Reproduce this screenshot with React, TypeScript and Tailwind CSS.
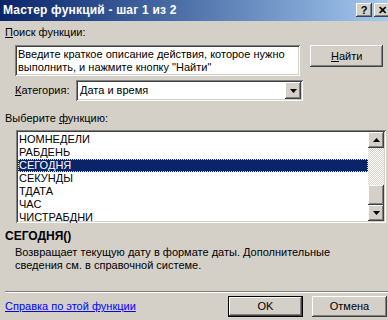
import React from 'react'

const raised =
  'bg-[#d4d0c8] shadow-[inset_-1px_-1px_#404040,inset_1px_1px_#ffffff,inset_-2px_-2px_#808080,inset_2px_2px_#d4d0c8]'
const sunken =
  'bg-white shadow-[inset_1px_1px_#808080,inset_-1px_-1px_#ffffff,inset_2px_2px_#404040,inset_-2px_-2px_#d4d0c8]'

const funcs = ['НОМНЕДЕЛИ', 'РАБДЕНЬ', 'СЕГОДНЯ', 'СЕКУНДЫ', 'ТДАТА', 'ЧАС', 'ЧИСТРАБДНИ']

function Arrow({ down }: { down?: boolean }) {
  return (
    <svg width="7" height="4" viewBox="0 0 7 4" className="block">
      {down ? <polygon points="0,0 7,0 3.5,4" fill="#000" /> : <polygon points="0,4 7,4 3.5,0" fill="#000" />}
    </svg>
  )
}

export default function App() {
  return (
    <div className="w-[388px] h-[320px] overflow-hidden bg-[#d4d0c8] text-[11px] leading-[13px] text-black font-['Liberation_Sans',Arial,sans-serif]">
      {/* title bar */}
      <div className="flex h-[21px] items-center justify-between bg-gradient-to-r from-[#0a246a] to-[#a6caf0] pl-[3px]">
        <span className="text-[12px] font-bold tracking-[0.2px] text-white">Мастер функций - шаг 1 из 2</span>
        <div className="mr-[-2px] flex gap-[2px] self-start pt-[3px]">
          <div className={`flex h-[14px] w-[16px] items-center justify-center text-[11px] font-bold ${raised}`}>?</div>
          <div className={`flex h-[14px] w-[16px] items-center justify-center text-[11px] font-bold ${raised}`}>✕</div>
        </div>
      </div>

      <div className="px-[5px]">
        <div className="mt-[5px] h-[13px]">
          <span className="underline">П</span>оиск функции:
        </div>

        <div className="mt-[6px] flex items-start">
          <div className={`ml-[10px] h-[31px] w-[287px] px-[3px] pt-[3px] ${sunken}`}>
            Введите краткое описание действия, которое нужно
            <br />
            выполнить, и нажмите кнопку "Найти"
          </div>
          <button className={`ml-[10px] h-[22px] w-[73px] text-[11px] ${raised}`}>
            <span className="underline">Н</span>айти
          </button>
        </div>

        <div className="mt-[4px] flex h-[21px] items-center">
          <span className="ml-[10px] w-[61px]">
            <span className="underline">К</span>атегория:
          </span>
          <div className={`flex h-[21px] w-[227px] items-center justify-between pl-[4px] pr-[2px] ${sunken}`}>
            <span>Дата и время</span>
            <div className={`flex h-[17px] w-[16px] items-center justify-center ${raised}`}>
              <Arrow down />
            </div>
          </div>
        </div>

        <div className="mt-[11px] h-[13px]">
          Выберите <span className="underline">ф</span>ункцию:
        </div>

        <div className={`ml-[11px] mt-[5px] flex h-[93px] w-[370px] p-[2px] ${sunken}`}>
          <div className="flex-1 pt-[1px]">
            {funcs.map((f) => (
              <div
                key={f}
                className={
                  f === 'СЕГОДНЯ'
                    ? 'h-[13px] bg-[#0a246a] pl-[1px] text-white outline-1 outline-dotted outline-[#f5db95] -outline-offset-1'
                    : 'h-[13px] pl-[1px]'
                }
              >
                {f}
              </div>
            ))}
          </div>
          <div className="flex w-[16px] flex-col">
            <div className={`flex h-[16px] items-center justify-center ${raised}`}>
              <Arrow />
            </div>
            <div className="h-[38px] bg-[repeating-conic-gradient(#d4d0c8_0_25%,#ffffff_0_50%)] bg-[length:2px_2px]" />
            <div className={`h-[20px] ${raised}`} />
            <div className="flex-1 bg-[repeating-conic-gradient(#d4d0c8_0_25%,#ffffff_0_50%)] bg-[length:2px_2px]" />
            <div className={`flex h-[16px] items-center justify-center ${raised}`}>
              <Arrow down />
            </div>
          </div>
        </div>

        <div className="mt-[7px] h-[13px] text-[12px] font-bold">СЕГОДНЯ()</div>
        <div className="ml-[10px] mt-[3px]">
          Возвращает текущую дату в формате даты. Дополнительные
          <br />
          сведения см. в справочной системе.
        </div>

        <div className="mr-[-5px] mt-[19px] h-[2px] border-t border-b border-t-[#808080] border-b-white" />

        <div className="mt-[3px] flex h-[21px] items-center">
          <a className="text-[#0000ff] underline">Справка по этой функции</a>
          <button className="ml-auto h-[21px] w-[75px] border border-black text-[11px]">
            <div className={`flex h-full w-full items-center justify-center ${raised}`}>OK</div>
          </button>
          <button className={`ml-[9px] mr-[-4px] h-[21px] w-[75px] text-[11px] ${raised}`}>Отмена</button>
        </div>
      </div>
    </div>
  )
}
